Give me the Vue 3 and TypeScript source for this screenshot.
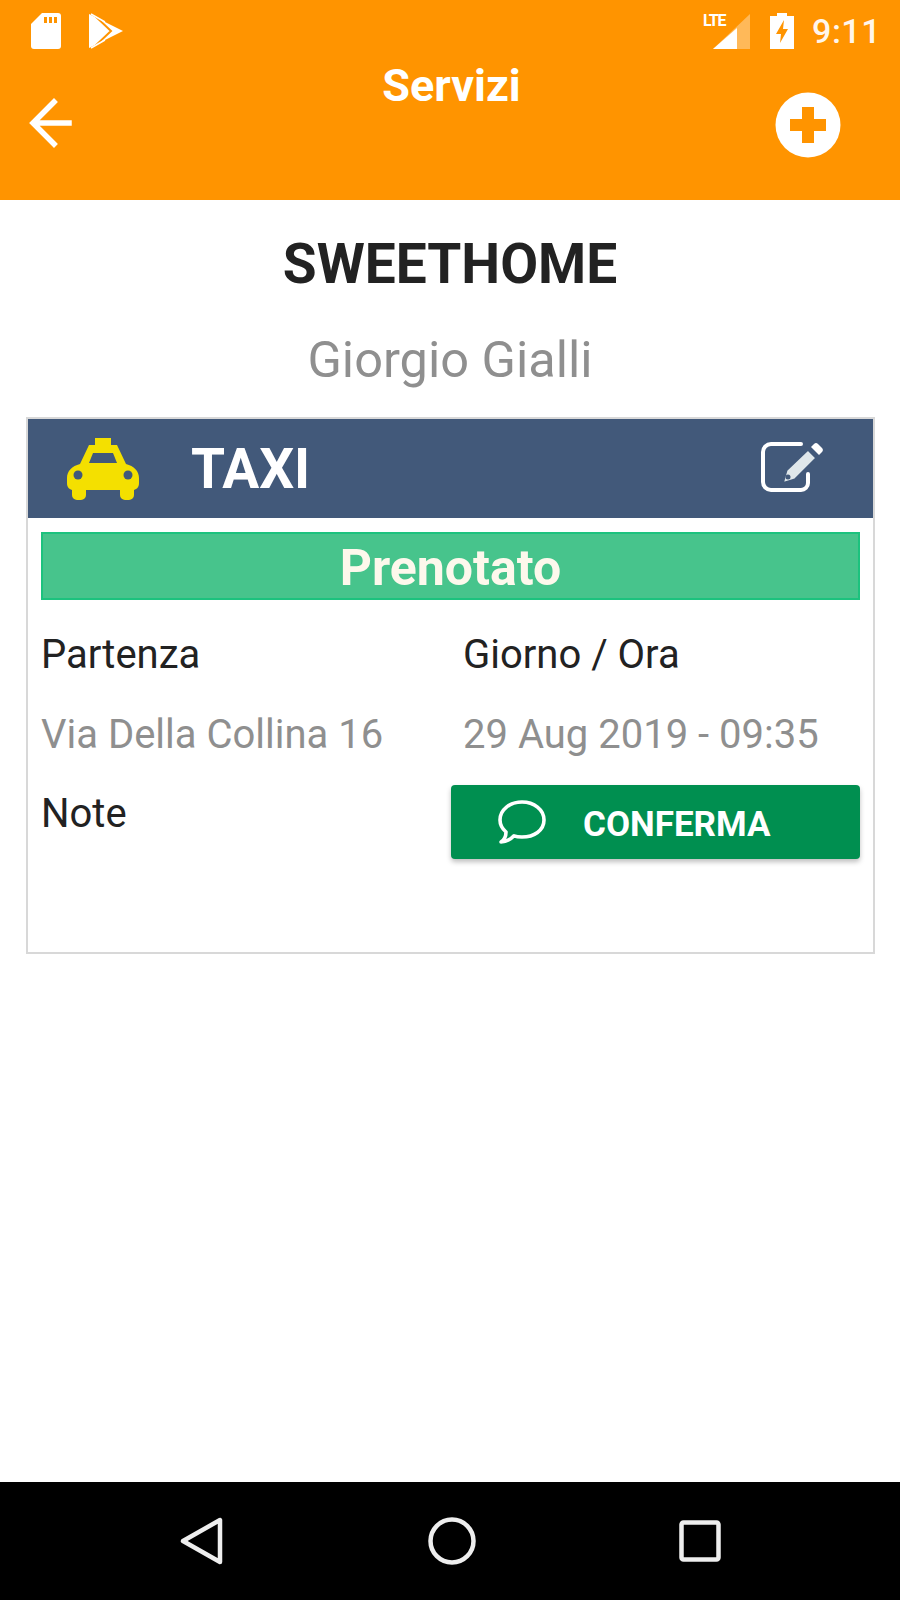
<script setup lang="ts">
const fields = [
  { label: 'Partenza', value: 'Via Della Collina 16' },
  { label: 'Giorno / Ora', value: '29 Aug 2019 - 09:35' },
]
</script>

<template>
  <div class="screen">
    <header class="header">
      <div class="status">
        <div class="status-left">
          <svg width="30" height="36" viewBox="0 0 30 36"><path fill="#fff" d="M11 0h16a3 3 0 0 1 3 3v30a3 3 0 0 1-3 3H3a3 3 0 0 1-3-3V11Z"/><path fill="#ff9400" d="M13 4h3v6h-3zM18 4h3v6h-3zM23 4h3v6h-3z"/></svg>
          <svg width="34" height="36" viewBox="0 0 34 36"><path fill="#fff" d="M0 1v34l34-17Z"/><path fill="none" stroke="#ff9400" stroke-width="2" d="M3 0l19 18L3 36"/><path fill="none" stroke="#fff" stroke-width="1.500" d="M2 1l14 8M2 35l14-8"/></svg>
        </div>
        <div class="status-right">
          <div class="signal">
            <span class="lte">LTE</span>
            <svg width="37" height="35" viewBox="0 0 37 35"><path fill="#fff" opacity=".35" d="M37 0v35H0Z"/><path fill="#fff" d="M24 14v21H0Z"/></svg>
          </div>
          <svg width="24" height="36" viewBox="0 0 24 36"><path fill="#fff" d="M7 0h10v3h7v33H0V3h7Z"/><path fill="#ff9400" d="M14 7 6 21h5l-1 9 8-14h-5Z"/></svg>
          <span class="time">9:11</span>
        </div>
      </div>
      <div class="toolbar">
        <svg class="back" width="43" height="50" viewBox="0 0 43 50"><path fill="none" stroke="#fff" stroke-width="5.500" stroke-linecap="square" d="M25 4 4 25l21 21M6 25h34"/></svg>
        <h1 class="title">Servizi</h1>
        <svg class="add" width="66" height="66" viewBox="0 0 66 66"><circle cx="33" cy="33" r="32.500" fill="#fff"/><path fill="#ff9400" d="M27 15h12v12h12v12H39v12H27V39H15V27h12Z"/></svg>
      </div>
    </header>

    <main class="main">
      <h2 class="brand">SWEETHOME</h2>
      <p class="person">Giorgio Gialli</p>

      <section class="card">
        <div class="card-head">
          <svg class="taxi" width="72" height="62" viewBox="0 0 72 62">
            <path fill="#f4e000" d="M28 0h16v7h6l9 19c8 2 13 7 13 14v5c0 4-2 6-5 7v5a5 5 0 0 1-5 5h-4a5 5 0 0 1-5-5v-5H19v5a5 5 0 0 1-5 5h-4a5 5 0 0 1-5-5v-5c-3-1-5-3-5-7v-5c0-7 5-12 13-14l9-19h6Z"/>
            <path fill="#42597a" d="M26 15h20l4 10H22Z"/>
            <circle cx="11" cy="37" r="4.500" fill="#42597a"/>
            <circle cx="61" cy="37" r="4.500" fill="#42597a"/>
          </svg>
          <span class="taxi-label">TAXI</span>
          <svg class="edit" width="62" height="52" viewBox="0 0 62 52">
            <path fill="none" stroke="#fff" stroke-width="4" stroke-linecap="round" d="M40 3H10a8 8 0 0 0-8 8v30a8 8 0 0 0 8 8h30a7 7 0 0 0 7-7V33"/>
            <path fill="#dfe7ea" stroke="#42597a" stroke-width="3" d="M21 43l4-14L47 8l9 9-22 22Z"/>
            <path fill="#fff" d="M50 6l3-3a3 3 0 0 1 4 0l4 4a3 3 0 0 1 0 4l-3 3Z"/>
            <circle cx="27" cy="36" r="2.500" fill="#42597a"/>
          </svg>
        </div>

        <div class="card-body">
          <div class="state">Prenotato</div>
          <div class="grid">
            <div v-for="f in fields" :key="f.label" class="field">
              <span class="label">{{ f.label }}</span>
              <span class="value">{{ f.value }}</span>
            </div>
            <span class="label note">Note</span>
            <button class="confirm" type="button">
              <svg width="48" height="44" viewBox="0 0 48 44"><path fill="none" stroke="#fff" stroke-width="3.600" stroke-linejoin="round" d="M24 2c12 0 22 7.500 22 18s-10 17-22 17c-3 0-6-.4-8-1.200C13 39 8 42 3 42c3-2 5-6 5-10C4 28.500 2 25 2 20 2 9.500 12 2 24 2Z"/></svg>
              <span class="confirm-text">CONFERMA</span>
            </button>
          </div>
        </div>
      </section>
    </main>

    <nav class="nav">
      <svg width="44" height="48" viewBox="0 0 44 48"><path fill="none" stroke="#eee" stroke-width="4.500" stroke-linejoin="round" d="M40 3v42L3 24Z"/></svg>
      <svg width="48" height="48" viewBox="0 0 48 48"><circle cx="24" cy="24" r="21.500" fill="none" stroke="#eee" stroke-width="4.500"/></svg>
      <svg width="42" height="42" viewBox="0 0 42 42"><rect x="2.500" y="2.500" width="37" height="37" rx="2" fill="none" stroke="#eee" stroke-width="4.500"/></svg>
    </nav>
  </div>
</template>

<style scoped>
.screen {
  width: 900px;
  height: 1600px;
  display: flex;
  flex-direction: column;
  background: #fff;
  font-family: Roboto, "Liberation Sans", sans-serif;
  color: #222;
}
.header {
  height: 200px;
  flex: none;
  background: #ff9400;
  color: #fff;
  box-sizing: border-box;
  padding: 13px 19px 0 31px;
}
.status {
  height: 36px;
  display: flex;
  justify-content: space-between;
  align-items: center;
}
.status-left {
  display: flex;
  align-items: center;
  gap: 28px;
}
.status-right {
  display: flex;
  align-items: center;
}
.signal {
  position: relative;
  width: 47px;
  height: 35px;
  margin-right: 20px;
  display: flex;
  justify-content: flex-end;
}
.lte {
  position: absolute;
  left: 0;
  top: -1px;
  font-size: 16px;
  font-weight: 700;
  letter-spacing: -1.200px;
  line-height: 16px;
}
.time {
  margin-left: 18px;
  font-size: 34px;
  font-weight: 500;
  letter-spacing: .5px;
  line-height: 36px;
  opacity: .92;
}
.toolbar {
  display: grid;
  grid-template-columns: 1fr auto 1fr;
  margin-right: 9px;
}
.back {
  margin-top: 49px;
  margin-left: -2px;
}
.title {
  margin: 14px 0 0;
  font-size: 45px;
  line-height: 46px;
  font-weight: 700;
}
.add {
  justify-self: end;
  margin-top: 43px;
  margin-right: 31px;
}
.main {
  flex: 1;
  display: flex;
  flex-direction: column;
  align-items: center;
}
.brand {
  margin: 35px 0 0;
  font-size: 55px;
  line-height: 58px;
  font-weight: 700;
  color: #222;
}
.person {
  margin: 40px 0 0;
  font-size: 50.500px;
  line-height: 54px;
  color: #8f8f8f;
}
.card {
  width: 849px;
  height: 537px;
  margin-top: 30px;
  box-sizing: border-box;
  border: 2px solid #d8d8d8;
  align-self: flex-start;
  margin-left: 26px;
}
.card-head {
  height: 99px;
  background: #42597a;
  display: flex;
  align-items: center;
  padding: 0 50px 0 39px;
  color: #fff;
}
.taxi {
  flex: none;
}
.taxi-label {
  margin-left: 52px;
  font-size: 55px;
  font-weight: 700;
}
.edit {
  margin-left: auto;
  margin-top: -4px;
}
.card-body {
  padding: 14px 13px 0 13px;
}
.state {
  height: 68px;
  box-sizing: border-box;
  border: 2px solid #1cc27e;
  padding-top: 4px;
  background: #47c48c;
  color: #fdf8ec;
  display: flex;
  align-items: center;
  justify-content: center;
  font-size: 50px;
  font-weight: 700;
}
.grid {
  display: grid;
  grid-template-columns: 410px 409px;
  margin-top: 33px;
}
.field {
  display: flex;
  flex-direction: column;
  gap: 36px;
}
.field + .field {
  padding-left: 12px;
}
.label {
  font-size: 40px;
  line-height: 44px;
  color: #222;
}
.value {
  font-size: 40px;
  line-height: 44px;
  color: #8f8f8f;
}
.note {
  margin-top: 35px;
}
.confirm {
  height: 74px;
  margin-top: 28px;
  padding: 0 0 0 47px;
  border: 0;
  border-radius: 4px;
  background: #008f50;
  color: #fff;
  box-shadow: 0 3px 5px rgba(0, 0, 0, .25);
  display: flex;
  align-items: center;
  gap: 37px;
  font-family: inherit;
  font-size: 35px;
  font-weight: 700;
}
.confirm-text {
  padding-top: 4px;
}
.nav {
  height: 118px;
  flex: none;
  background: #000;
  display: grid;
  grid-template-columns: 44px 48px 42px;
  justify-content: space-between;
  align-items: center;
  padding: 0 179px 0 180px;
}
</style>
